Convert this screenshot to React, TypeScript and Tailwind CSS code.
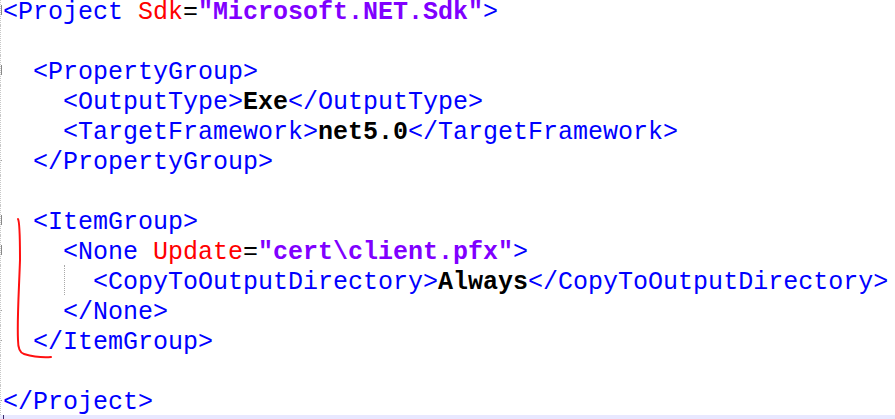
type Seg = { t: string; c?: string };

const tag = "text-[#0000ff]";
const attr = "text-[#ff0000]";
const val = "text-[#8000ff] font-bold";
const txt = "text-black font-bold";

const lines: { segs: Seg[]; mark?: "open" | "close" }[] = [
  { segs: [{ t: "<Project ", c: tag }, { t: "Sdk", c: attr }, { t: "=" }, { t: '"Microsoft.NET.Sdk"', c: val }, { t: ">", c: tag }], mark: "open" },
  { segs: [] },
  { segs: [{ t: "  " }, { t: "<PropertyGroup>", c: tag }], mark: "open" },
  { segs: [{ t: "    " }, { t: "<OutputType>", c: tag }, { t: "Exe", c: txt }, { t: "</OutputType>", c: tag }] },
  { segs: [{ t: "    " }, { t: "<TargetFramework>", c: tag }, { t: "net5.0", c: txt }, { t: "</TargetFramework>", c: tag }] },
  { segs: [{ t: "  " }, { t: "</PropertyGroup>", c: tag }], mark: "close" },
  { segs: [] },
  { segs: [{ t: "  " }, { t: "<ItemGroup>", c: tag }], mark: "open" },
  { segs: [{ t: "    " }, { t: "<None ", c: tag }, { t: "Update", c: attr }, { t: "=" }, { t: '"cert\\client.pfx"', c: val }, { t: ">", c: tag }], mark: "open" },
  { segs: [{ t: "      " }, { t: "<CopyToOutputDirectory>", c: tag }, { t: "Always", c: txt }, { t: "</CopyToOutputDirectory>", c: tag }] },
  { segs: [{ t: "    " }, { t: "</None>", c: tag }], mark: "close" },
  { segs: [{ t: "  " }, { t: "</ItemGroup>", c: tag }], mark: "close" },
  { segs: [] },
  { segs: [{ t: "</Project>", c: tag }], mark: "close" },
];

export default function App() {
  return (
    <div className="relative w-[895px] h-[419px] overflow-hidden bg-white font-['Liberation_Mono','Courier_New',monospace] text-[25px] leading-[30px] text-black">
      <div className="-mt-[5px] flex flex-col">
        {lines.map((line, i) => (
          <div key={i} className="relative flex h-[30px]">
            <div className="w-[2px] shrink-0 border-l border-dotted border-[#c8c8c8] flex items-center">
              {line.mark === "open" && <div className="w-[2px] h-[10px] bg-[#8a8a8a]" />}
              {line.mark === "close" && <div className="w-[2px] h-px bg-[#a0a0a0]" />}
            </div>
            <div className="pl-px pt-[3px] whitespace-pre">
              {line.segs.map((s, j) => (
                <span key={j} className={s.c}>
                  {s.t}
                </span>
              ))}
            </div>
            {i === 9 && (
              <div className="absolute left-[64px] top-0 bottom-0 w-px border-l border-dotted border-[#a8a8a8]" />
            )}
          </div>
        ))}
        <div className="flex h-[30px] bg-[#e8e8ff]">
          <div className="w-[3px] shrink-0" />
          <div className="w-px h-full bg-[#3a2a6a]" />
        </div>
      </div>

      <svg className="absolute left-0 top-0 pointer-events-none" width="895" height="419">
        <path
          d="M18 219 C 20 222, 20 240, 20 260 C 19 290, 17 320, 18 340 C 18 348, 20 353, 24 354 C 31 356, 40 358, 51 357"
          fill="none"
          stroke="#ff1010"
          strokeWidth="2"
          strokeLinecap="round"
        />
      </svg>
    </div>
  );
}
